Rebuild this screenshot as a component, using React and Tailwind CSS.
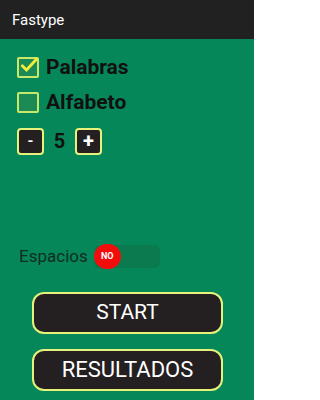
import React, { useState } from 'react';

const App = () => {
  const [palabras, setPalabras] = useState(true);
  const [alfabeto, setAlfabeto] = useState(false);
  const [count, setCount] = useState(5);
  const [espacios, setEspacios] = useState(false);

  const Box = ({ checked, onClick }) => (
    <button
      onClick={onClick}
      className="relative w-[22px] h-[21px] border-2 border-[#c9e86a] bg-[#1c8a55] rounded-[2px]"
    >
      {checked && (
        <svg viewBox="0 0 24 24" className="absolute -top-[4px] left-0 w-[20px] h-[20px]">
          <path d="M3 12l6 6L22 4" fill="none" stroke="#f2ee3a" strokeWidth="3.4" />
        </svg>
      )}
    </button>
  );

  return (
    <div className="w-[254px] h-[400px] flex flex-col bg-[#06875a] font-['Roboto',sans-serif]">
      {/* Toolbar */}
      <div className="h-[39px] bg-[#212121] flex items-center px-3 pt-[1px]">
        <span className="text-white text-[15px]">Fastype</span>
      </div>

      <div className="flex flex-col pl-[17px] pt-[18px]">
        <div className="flex items-center gap-[7px] h-[21px]">
          <Box checked={palabras} onClick={() => setPalabras(!palabras)} />
          <span className="text-[21px] font-bold text-[#111]">Palabras</span>
        </div>
        <div className="flex items-center gap-[7px] h-[21px] mt-[14px]">
          <Box checked={alfabeto} onClick={() => setAlfabeto(!alfabeto)} />
          <span className="text-[21px] font-bold text-[#111]">Alfabeto</span>
        </div>
        <div className="flex items-center mt-[13px]">
          <button
            onClick={() => setCount(count - 1)}
            className="w-[27px] h-[27px] rounded-[4px] border-2 border-[#e6f27a] bg-[#242021] text-white text-[15px] font-bold flex items-center justify-center"
          >
            -
          </button>
          <span className="w-[31px] text-center text-[20px] font-bold text-[#111]">{count}</span>
          <button
            onClick={() => setCount(count + 1)}
            className="w-[27px] h-[27px] rounded-[4px] border-2 border-[#e6f27a] bg-[#242021] text-white text-[20px] font-bold flex items-center justify-center"
          >
            +
          </button>
        </div>
      </div>

      {/* Espacios switch */}
      <div className="flex items-center pl-[19px] mt-[88px]">
        <span className="text-[17px] text-[#0f2e20] mr-[6px]">Espacios</span>
        <button
          onClick={() => setEspacios(!espacios)}
          className="relative w-[66px] h-[23px] rounded-[6px] bg-[#0b7a4e]"
        >
          <span
            className={`absolute -top-[1px] w-[27px] h-[25px] rounded-full flex items-center justify-center text-[9px] font-bold text-white ${
              espacios ? 'right-0 bg-[#e8e8e8] text-[#333]' : 'left-0 bg-[#f20d0d]'
            }`}
          >
            {espacios ? 'SI' : 'NO'}
          </span>
        </button>
      </div>

      {/* Buttons */}
      <div className="flex flex-col items-center gap-[15px] mt-[22px] pl-[1px]">
        <button className="w-[191px] h-[42px] rounded-[12px] border-2 border-[#e6f27a] bg-[#242021] text-white text-[21px]">
          START
        </button>
        <button className="w-[191px] h-[42px] rounded-[12px] border-2 border-[#e6f27a] bg-[#242021] text-white text-[22px]">
          RESULTADOS
        </button>
      </div>
    </div>
  );
};

export default App;
